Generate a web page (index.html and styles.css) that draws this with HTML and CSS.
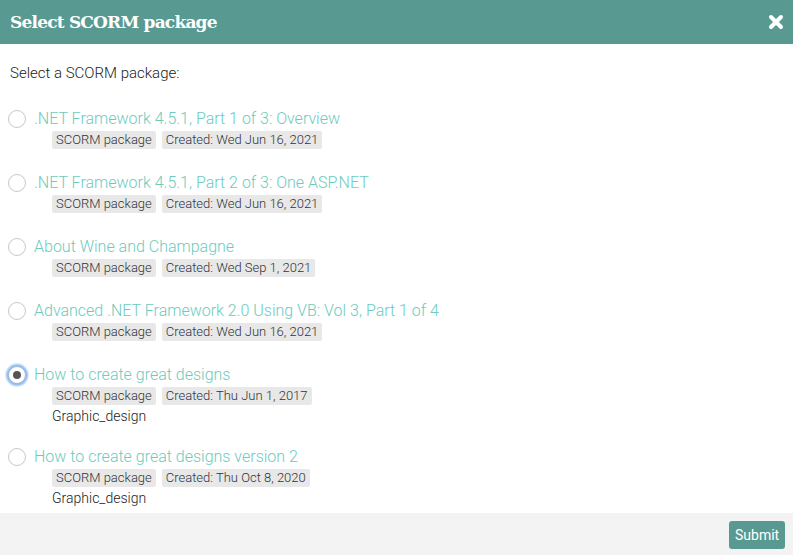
FILE: index.html
```html
<!DOCTYPE html>
<html>
<head>
<meta charset="utf-8">
<link rel="stylesheet" href="styles.css">
</head>
<body>
<div class="dialog">
  <div class="header">
    <span class="title">Select SCORM package</span>
    <svg class="close" width="16" height="16" viewBox="0 0 16 16"><path d="M3 3L13 13M13 3L3 13" stroke="#fff" stroke-width="4" stroke-linecap="round"/></svg>
  </div>
  <div class="content">
    <p class="intro">Select a SCORM package:</p>
    <div class="item">
      <span class="radio"></span>
      <div class="info">
        <a class="name">.NET Framework 4.5.1, Part 1 of 3: Overview</a>
        <div class="tags"><span class="tag">SCORM package</span><span class="tag">Created: Wed Jun 16, 2021</span></div>
      </div>
    </div>
    <div class="item">
      <span class="radio"></span>
      <div class="info">
        <a class="name">.NET Framework 4.5.1, Part 2 of 3: One ASP.NET</a>
        <div class="tags"><span class="tag">SCORM package</span><span class="tag">Created: Wed Jun 16, 2021</span></div>
      </div>
    </div>
    <div class="item">
      <span class="radio"></span>
      <div class="info">
        <a class="name">About Wine and Champagne</a>
        <div class="tags"><span class="tag">SCORM package</span><span class="tag">Created: Wed Sep 1, 2021</span></div>
      </div>
    </div>
    <div class="item">
      <span class="radio"></span>
      <div class="info">
        <a class="name">Advanced .NET Framework 2.0 Using VB: Vol 3, Part 1 of 4</a>
        <div class="tags"><span class="tag">SCORM package</span><span class="tag">Created: Wed Jun 16, 2021</span></div>
      </div>
    </div>
    <div class="item">
      <span class="radio checked"></span>
      <div class="info">
        <a class="name">How to create great designs</a>
        <div class="tags"><span class="tag">SCORM package</span><span class="tag">Created: Thu Jun 1, 2017</span></div>
        <div class="cat">Graphic_design</div>
      </div>
    </div>
    <div class="item">
      <span class="radio"></span>
      <div class="info">
        <a class="name">How to create great designs version 2</a>
        <div class="tags"><span class="tag">SCORM package</span><span class="tag">Created: Thu Oct 8, 2020</span></div>
        <div class="cat">Graphic_design</div>
      </div>
    </div>
  </div>
  <div class="footer">
    <button class="submit">Submit</button>
  </div>
</div>
</body>
</html>
```
FILE: styles.css
```css
* { box-sizing: border-box; }
html, body { margin: 0; padding: 0; background: #fff; }
body { font-family: Roboto, "Noto Sans", sans-serif; color: #333; }
.dialog { width: 793px; height: 555px; display: flex; flex-direction: column; overflow: hidden; }
.header { height: 44px; background: #589a92; color: #fff; display: flex; align-items: center; justify-content: space-between; padding: 0 10px 0 10px; flex: none; }
.title { font-family: "DejaVu Serif", "Liberation Serif", serif; font-weight: bold; font-size: 17px; letter-spacing: -0.8px; }
.close { display: block; margin-right: -1px; }
.content { flex: 1; padding: 0 8px; }
.intro { margin: 19px 0 0 2px; font-size: 15px; font-weight: 300; line-height: 20px; color: #222; }
.item { display: flex; align-items: flex-start; margin-top: 24px; }
.intro + .item { margin-top: 26px; }
.radio { width: 18px; height: 18px; border: 1px solid #c8c8c8; border-radius: 50%; margin-top: 1px; margin-right: 8px; flex: none; background: #fff; display: flex; align-items: center; justify-content: center; }
.radio.checked { border-color: #9fb8d8; box-shadow: 0 0 2px 2px #8fbdf0; }
.radio.checked::after { content: ""; width: 8px; height: 8px; border-radius: 50%; background: #555; }
.info { display: flex; flex-direction: column; }
.name { color: #6ccbbd; font-size: 16px; line-height: 20px; font-weight: 300; text-decoration: none; }
.tags { display: flex; gap: 6px; margin: 2px 0 0 18px; }
.tag { background: #e8e8e8; border-radius: 2px; font-size: 13px; line-height: 18px; height: 18px; padding: 0 4px; font-weight: 300; color: #333; }
.cat { margin: 2px 0 -2px 18px; font-size: 14px; line-height: 18px; font-weight: 300; color: #222; }
.footer { height: 42px; background: #f3f3f3; flex: none; display: flex; align-items: center; justify-content: flex-end; padding: 0 8px; }
.submit { background: #589a92; color: #fff; border: none; border-radius: 3px; font-family: Roboto, sans-serif; font-size: 14px; font-weight: 400; height: 28px; padding: 0 6px; width: 56px; margin-top: 2px; }
```
